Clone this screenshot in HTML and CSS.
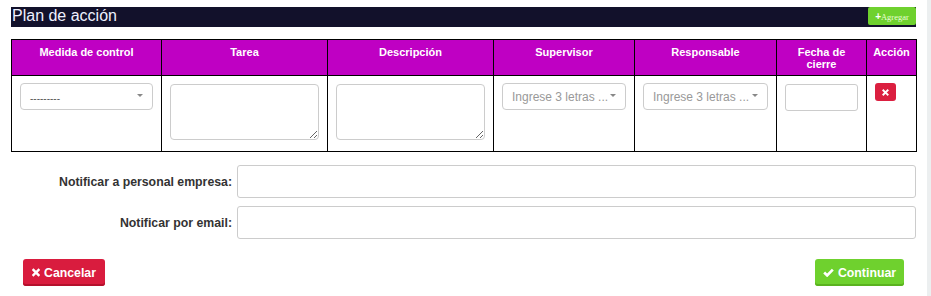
FILE: index.html
```html
<!DOCTYPE html>
<html lang="es">

<head>
  <meta charset="UTF-8">
  <title>Plan de acción</title>
  <link rel="stylesheet" href="styles.css">
</head>

<body>
  <div class="page">
    <div class="section-bar">
      <h2>Plan de acción</h2>
      <button class="btn-add"><b>+</b>Agregar</button>
    </div>

    <table class="plan-table">
      <colgroup>
        <col style="width: 150px">
        <col style="width: 166px">
        <col style="width: 166px">
        <col style="width: 141px">
        <col style="width: 142px">
        <col style="width: 90px">
        <col style="width: 50px">
      </colgroup>
      <thead>
        <tr>
          <th>Medida de control</th>
          <th>Tarea</th>
          <th>Descripción</th>
          <th>Supervisor</th>
          <th>Responsable</th>
          <th class="narrow">Fecha de cierre</th>
          <th>Acción</th>
        </tr>
      </thead>
      <tbody>
        <tr>
          <td>
            <div class="select">
              <span class="select-value">---------</span>
              <span class="caret"></span>
            </div>
          </td>
          <td><textarea class="area"></textarea></td>
          <td><textarea class="area"></textarea></td>
          <td>
            <div class="select">
              <span class="select-placeholder">Ingrese 3 letras ...</span>
              <span class="caret"></span>
            </div>
          </td>
          <td>
            <div class="select">
              <span class="select-placeholder">Ingrese 3 letras ...</span>
              <span class="caret"></span>
            </div>
          </td>
          <td><input class="date-input" type="text"></td>
          <td>
            <button class="btn-remove">
              <svg width="7" height="7" viewBox="0 0 10 10">
                <path d="M2 2 L8 8 M8 2 L2 8" stroke="#fff" stroke-width="2.8" stroke-linecap="square" />
              </svg>
            </button>
          </td>
        </tr>
      </tbody>
    </table>

    <div class="form-rows">
      <div class="form-row">
        <label>Notificar a personal empresa:</label>
        <input class="form-input" type="text">
      </div>
      <div class="form-row">
        <label>Notificar por email:</label>
        <input class="form-input" type="text">
      </div>
    </div>

    <div class="actions">
      <button class="btn btn-danger">
        <svg width="8" height="9" viewBox="0 0 10 10">
          <path d="M1.8 1.8 L8.2 8.2 M8.2 1.8 L1.8 8.2" stroke="#fff" stroke-width="3" stroke-linecap="square" />
        </svg>
        Cancelar
      </button>
      <button class="btn btn-success">
        <svg width="11" height="9" viewBox="0 0 12 10">
          <path d="M1.2 5 L4.5 8.2 L10.8 1.8" fill="none" stroke="#fff" stroke-width="3" />
        </svg>
        Continuar
      </button>
    </div>
  </div>
</body>

</html>
```

FILE: styles.css
```css
* {
  margin: 0;
  padding: 0;
  box-sizing: border-box;
}

body {
  font-family: "Liberation Sans", Arial, sans-serif;
  background: #eceff0;
  height: 296px;
  overflow: hidden;
}

.page {
  width: 927px;
  height: 296px;
  background: #fff;
  padding: 7px 11px 0 11px;
}

.section-bar {
  display: flex;
  justify-content: space-between;
  align-items: flex-start;
  height: 20px;
  background: #12112b;
}

.section-bar h2 {
  font-weight: normal;
  font-size: 16px;
  line-height: 18px;
  color: #eef0ff;
  padding-left: 1px;
}

.btn-add {
  width: 48px;
  height: 18px;
  background: #6fd12e;
  border: none;
  border-radius: 2px;
  color: #eaffd8;
  font-family: "Liberation Serif", serif;
  font-size: 8.5px;
}

.btn-add b {
  font-family: "Liberation Sans", Arial, sans-serif;
  font-size: 10px;
  color: #fff;
}

.plan-table {
  margin-top: 12px;
  width: 905px;
  border-collapse: collapse;
  table-layout: fixed;
}

.plan-table th,
.plan-table td {
  border: 1px solid #000;
  vertical-align: top;
}

.plan-table th {
  background: #bf00c3;
  color: #fff;
  font-size: 11px;
  font-weight: bold;
  line-height: 12px;
  height: 36px;
  padding: 6px 4px 0 4px;
}

.plan-table th.narrow {
  padding: 6px 12px 0 12px;
}

.plan-table td {
  height: 76px;
  padding: 7px 8px 0 8px;
}

.select {
  display: flex;
  justify-content: space-between;
  align-items: center;
  height: 27px;
  border: 1px solid #ccc;
  border-radius: 4px;
  padding: 0 9px;
  background: #fff;
}

.select-value {
  font-size: 10px;
  color: #555;
  padding-top: 4px;
}

.select-placeholder {
  font-size: 12px;
  color: #999;
  white-space: nowrap;
}

.caret {
  width: 0;
  height: 0;
  border-left: 3px solid transparent;
  border-right: 3px solid transparent;
  border-top: 3px solid #888;
  margin-top: -2px;
}

.area {
  display: block;
  width: 100%;
  height: 56px;
  margin-top: 1px;
  border: 1px solid #ccc;
  border-radius: 4px;
}

.date-input {
  display: block;
  width: 73px;
  height: 27px;
  margin-top: 1px;
  border: 1px solid #ccc;
  border-radius: 3px;
}

.btn-remove {
  display: flex;
  justify-content: center;
  align-items: center;
  width: 21px;
  height: 18px;
  background: #db1f40;
  border: none;
  border-radius: 3px;
}

.form-rows {
  display: flex;
  flex-direction: column;
  gap: 8px;
  margin-top: 13px;
}

.form-row {
  display: flex;
  align-items: center;
}

.form-row label {
  width: 226px;
  text-align: right;
  font-size: 12.3px;
  font-weight: bold;
  color: #333;
  padding-right: 5px;
}

.form-input {
  flex: 1;
  height: 33px;
  border: 1px solid #ccc;
  border-radius: 3px;
}

.actions {
  display: flex;
  justify-content: space-between;
  margin-top: 20px;
  padding: 0 12px;
}

.btn {
  display: flex;
  align-items: center;
  justify-content: center;
  gap: 4px;
  height: 27px;
  border: none;
  border-radius: 3px;
  color: #fff;
  font-family: "Liberation Sans", Arial, sans-serif;
  font-size: 12.3px;
  font-weight: bold;
  padding: 0;
}

.btn svg {
  flex-shrink: 0;
}

.btn-danger {
  width: 82px;
  background: #d91c3e;
  box-shadow: inset 0 -2px 0 #b5102c;
}

.btn-success {
  width: 89px;
  background: #6fd12e;
  box-shadow: inset 0 -2px 0 #5ab21f;
}
```
